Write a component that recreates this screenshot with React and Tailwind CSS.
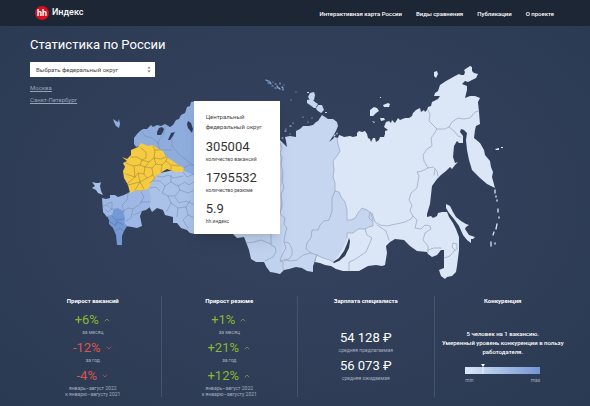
import React, { useState } from "react";
import { ChevronDown, ChevronUp } from "lucide-react";

const navItems = [
  { label: 'Интерактивная карта России', path: '#map' },
  { label: 'Виды сравнения', path: '#compare' },
  { label: 'Публикации', path: '#publications' },
  { label: 'О проекте', path: '#about' }
];

const districts = [
  'Центральный',
  'Северо-Западный',
  'Южный',
  'Северо-Кавказский',
  'Приволжский',
  'Уральский',
  'Сибирский',
  'Дальневосточный'
];

const cardStats = [
  { value: '305004', label: 'количество вакансий' },
  { value: '1795532', label: 'количество резюме' },
  { value: '5.9', label: 'hh.индекс' }
];

const growth = [
  {
    title: 'Прирост вакансий',
    rows: [
      { value: '+6%', up: true, label: ['за месяц'] },
      { value: '-12%', up: false, label: ['за год'] },
      { value: '-4%', up: false, label: ['январь–август 2022', 'к январю–августу 2021'] }
    ]
  },
  {
    title: 'Прирост резюме',
    rows: [
      { value: '+1%', up: true, label: ['за месяц'] },
      { value: '+21%', up: true, label: ['за год'] },
      { value: '+12%', up: true, label: ['январь–август 2022', 'к январю–августу 2021'] }
    ]
  }
];

const salaries = [
  { value: '54 128 ₽', label: 'средняя предлагаемая' },
  { value: '56 073 ₽', label: 'средняя ожидаемая' }
];

function Header() {
  return (
    <header className="flex h-[26px] items-center justify-between bg-[#1d2635] pr-9 pl-[35px] text-white">
      <a href="#" className="flex items-center gap-[3px]">
        <span className="flex size-[14px] items-center justify-center rounded-full bg-[#d6101e] text-[9px] leading-none font-bold">hh</span>
        <span className="text-[9px] font-medium">Индекс</span>
      </a>
      <nav className="flex gap-[14px] text-[6px] font-medium">
        {navItems.map((item) => (
          <a key={item.path} href={item.path}>{item.label}</a>
        ))}
      </nav>
    </header>
  );
}

function RussiaMap() {
  return (
    <svg viewBox="0 26 590 260" className="block w-full" strokeLinejoin="round" strokeLinecap="round" aria-hidden="true">
      {/* Far East */}
      <g fill="#dbe6f6">
        <polygon points="334,137 338,138 339,135 342,136 344,137 350,136 353,137 357,136 357,133 359,131 362,132 365,131 367,134 368,138 370,139 371,142 373,138 375,138 376,142 379,140 380,137 384,137 385,134 385,131 388,130 384,127 386,122 389,121 391,123 392,120 395,123 398,118 400,120 405,118 409,118 412,116 413,113 416,110 420,108 421,112 424,110 425,112 427,110 428,107 431,106 432,102 434,101 438,99 440,96 434,96 435,93 438,91 440,85 446,81 455,76 459,74 461,75 464,75 465,72 464,70 467,68 470,66 472,67 472,71 474,73 478,74 476,78 472,80 468,82 465,81 462,84 467,86 467,90 466,94 465,98 470,96 475,96 480,98 478,102 479,112 480,124 476,126 475,130 474,138 480,143 484,150 485,155 490,161 491,167 493,172 492,177 495,188 487,184 480,178 472,170 469,160 467,150 466,140 467,133 464,130 461,129 460,132 463,136 463,143 459,143 457,141 454,146 453,157 455,163 458,162 455,165 452,169 450,167 446,171 441,175 437,179 432,186 431,195 430,204 427,214 427,217 431,216 433,218 437,216 438,213 442,212 447,212 449,217 453,223 456,229 459,237 459,250 457,266 456,272 452,276 447,277 445,279 441,276 439,270 444,268 444,250 441,250 437,255 432,257 428,254 427,252 417,251 410,246 404,240 395,239 390,242 386,246 387,253 385,265 382,266 376,265 368,266 359,271 349,271 343,271 336,269 331,266 325,265 320,263 315,262 316,257 325,245 322,215 330,160" />
        <polygon points="446,204 450,206 453,212 456,217 461,221 466,224 469,225 466,227 465,229 469,235 475,237 473,239 471,239 471,243 467,240 463,235 459,226 454,219 449,213 446,208" />
        <polygon points="434,72 437,71 438,74 436,78 434,76" />
        <path d="M370 110l4-3 3 1 2 3-3 2-3 3-3 0zM383 105l5-2 2 1-1 3-5 0zM380 118l4 0 1 2-4 1zM372 121l3 1-1 1zM380 97l1 0 0 1-1 0z" />
        <path d="M475 140l2 1 1 4-2 0zM495 149l4-1 0 2-3 0zM501 147l2 0 0 1-2 0z" />
        <path stroke="#dbe6f6" strokeWidth="1.3" d="M495 190l0 3M496 196l0 1M497 200l0 1M498 209l0 3M499 217l0 1M497 224l-1 5M494 232l-1 3M491 242l0 4M495 243l0 1" />
      </g>
      {/* Siberia */}
      <polygon fill="#c6d6f0" points="278,138 281,141 284,144 287,147 286,141 285,137 290,136 296,137 296,134 296,131 300,129 303,126 309,126 313,125 316,122 318,121 320,118 322,115 325,117 328,119 333,119 337,122 338,126 336,131 333,136 329,142 334,138 337,138 338,144 340,151 337,156 333,161 334,170 333,177 335,183 335,191 339,192 341,197 345,202 347,210 347,220 351,220 355,218 358,213 362,208 367,210 371,213 373,220 373,226 369,227 365,229 358,229 353,233 347,233 347,239 343,248 338,256 333,262 329,259 323,258 317,256 315,261 313,266 313,272 307,271 302,268 296,267 289,269 284,270 280,274 276,273 267,268 262,255 270,220" />
      {/* Volga and Ural */}
      <polygon fill="#c0d2ee" points="230,225 282,225 282,268 277,273 270,272 266,266 264,262 256,262 251,259 249,250 246,242 244,237 237,238 231,232" />
      <polygon fill="#aac2e8" points="184,168 195,165 195,234 190,233 187,230 181,228 177,223 173,223 173,217 165,215 163,210 157,208 152,212 149,206 148,188 155,174" />
      <polygon fill="#b9cdec" points="278,140 282,144 280,151 282,158 281,168 284,178 281,188 283,208 278,216" />
      {/* Northwest */}
      <polygon fill="#8eaddd" points="196,101 191,102 190,106 187,107 185,113 181,115 179,119 176,120 173,125 170,127 165,124 161,126 157,125 153,127 151,125 147,129 143,129 140,131 137,134 134,138 134,144 136,147 139,146 148,152 170,160 182,170 196,176" />
      <polygon fill="#8eaddd" points="113,119 116,121 118,122 119,119 120,124 119,128 116,126 114,122" />
      <path fill="#2f3e59" d="M159 128l3-1 2 2-1 3-2 3-4 0 0-3zM171 133l4-1-2 4-3 4-2 0zM188 121l3 2 2 6-1 4-4-5-1-4z" />
      {/* South */}
      <polygon fill="#9db8e4" points="102,198 106,199 110,198 110,195 115,195 118,197 124,195 128,193 135,189 142,191 148,187 151,197 150,207 146,210 142,211 140,216 142,226 137,228 132,227 125,226 121,213 112,216 107,217 103,212" />
      <polygon fill="#aac2e8" points="92,182 96,183 99,183 101,182 100,186 101,191 103,195 98,193 96,190 92,188 95,186" />
      <polygon fill="#7599d5" points="107,216 112,215 114,209 118,208 123,211 125,218 124,223 127,226 124,231 122,236 122,245 117,245 116,235 113,228 109,224 109,220" />
      {/* Central */}
      <polygon fill="#f4cb42" points="122,157 127,159 131,155 131,150 138,147 141,143 148,146 153,145 157,148 163,151 166,157 173,161 178,165 184,168 183,172 175,172 167,169 162,172 155,177 153,180 148,189 141,191 137,190 130,193 128,185 124,178 123,171 125,167 123,163 127,161" />
      {/* Arctic islands */}
      <path fill="#c6d6f0" d="M310 93l4-1 1 3-1 5-4 0-2-3zM307 100l5-1 3 3 3 2-2 3 1 1-3 0-4-3-3-2zM318 105l4 0 2 5-3 3-3-2-2-2zM325 112l2 0 0 1-2 0zM307 92l2 0 0 1-2 0z" />
      <path stroke="#8eaddd" strokeWidth="1.2" d="M266 80l2 1M268 83l2 0M270 82l1 2M273 82l0 0M272 86l1 0M275 84l1 0M277 86l1 2M280 83l0 1M279 88l1 1M282 87l1 1M284 85l0 0M268 81l1 0M275 88l1 0M296 92l0 0M291 100l0 0M283 89l0 1" />
      <path stroke="#c6d6f0" strokeWidth="1.2" d="M303 117l0 0M290 126l1 0M293 123l0 0M285 131l1 0M290 134l0 0M286 129l0 0M282 138l1 0M308 122l0 0M312 118l0 0M334 136l1-1M337 133l0 1" />
      {/* Baikal */}
      <polygon fill="#2f3e59" points="349,238 350,241 349,248 345,256 339,261 334,263 333,262 339,258 344,251 347,244" />
      {/* Region borders */}
      <g fill="none" stroke="#7d8ba8" strokeWidth=".5">
        <polyline points="337,138 338,144 340,151 337,156 333,161 334,170 333,177 335,183 335,191 339,192 341,197 345,202 347,210 347,220 351,220 355,218 358,213 362,208 367,210 371,213 373,220 373,226 369,227 365,229 358,229 353,233 347,233 347,238" />
        <polyline points="335,191 332,198 332,206 332,211 329,220 324,221 320,225 318,230 312,230 311,238 307,243 306,249 311,253 317,255 323,258 330,260 334,263" />
        <path d="M317 255l-3 7M311 253l-8 2-6 5-8 1-4-2-5 3" />
        <polyline points="280,143 282,148 280,153 282,158 281,164 283,173 282,180 284,188 281,194 282,204 280,214 285,218 284,224 287,228 285,234 284,242 286,248 283,253 280,260 283,262 283,270" />
        <path d="M285 242l4 1 3 6 0 6-3 4-5 2M271 234l0 11 4 2 1 5-3 5-8 4M246 243l8-1 7-2 10 4" />
        <polyline points="365,229 367,235 372,238 369,245 366,252 360,256 354,260 349,262 349,271" />
        <polyline points="372,213 375,222 380,225 387,226 396,224 405,222 411,219 413,216 410,211 412,205 409,200 411,193 417,188 418,181 419,176 417,172 422,171 428,168 424,161 423,155 427,149 432,146 431,138 434,134 437,129 432,124 429,121 430,114 428,110" />
        <path d="M437 129l8 0 4-2 3-5 6-4 5 1 7-1 5-6 4-1M449 127l5 4 4 5 3 1M428 168l5-1 4 4 1 5M434 175l1-6M370 212l-1 6 3 3M377 225l9 6 3 9" />
        <path d="M413 216l4 4-2 8 6 1 4-4 5 1 1 3-6 4-2 7 5 6 0 6M428 250l6-2 7 0M444 258l6-2 4-5 3-2 0-5-4-1-1 4 3 3" />
      </g>
      <g fill="none" stroke="#7287ac" strokeWidth=".5">
        <path d="M142 132l3 4 7 2 6 5 2 7 11 0M165 126l-1 8-5 6-1 4M172 138l0 8 5 6 8 7 8 6M184 168l5-3 6 0M183 172l4 5 7-3" />
        <path d="M157 176l6 1 5-2 6 3 9-2M153 181l7 0 5 5 6-4 0-7M165 186l-3 7 6 3 3 7M160 191l-4-4-6 1M171 182l7 4 7-4 4 3 6-4M168 196l7 0 5-6-2-5M180 190l8 3 7-3M175 197l4 6 7-2 9 4M171 203l-4 8M171 203l7 5-1 9M178 208l8-1 2 8 7 3M186 207l4-6M188 215l-5 5 5 8" />
        <path d="M141 192l3 5-4 7-7 5-5-1-6 4M128 193l-1 7-5 5 2 7M133 209l-2 9-5 3M142 211l-8 4M150 202l-9 0M103 206l4-1 4 4 3 0M107 204l5-2 0 7-4 3-3-3" />
        <path stroke="#4e70ab" d="M112 216l4 4 8-1M110 222l5 3 2-4M115 226l3-4 5 3M116 231l4-3 3 3" />
      </g>
      <g fill="none" stroke="#a98a31" strokeWidth=".6">
        <path d="M131 157l6 0 5 3 4-2 0-6-5-4M142 160l-2 5-7 1-7-3M142 160l7 2 5-4 7 1 5-2M149 162l-4 5-5-2M154 158l1-8-2-4M155 150l4 0M145 167l-1 7-6-1-3 4-9-3M134 166l1 11M145 167l7 1 4-4-2-6M152 168l1 7-6 3-3-4M156 164l6 1 4-4 1-3M162 165l-1 7M166 161l5 4 0 5M172 165l7 1M138 173l2 9-5 8M135 177l-8 7M147 178l-7 4 4 7M153 175l2 3-5 5M140 182l-12 3" />
      </g>
    </svg>
  );
}

function DistrictCard() {
  return (
    <div className="absolute top-[29%] left-[33%] -ml-px w-[86px] bg-white px-[12px] pt-[11px] pb-[9px] text-[#444] shadow-lg">
      <h2 className="text-[6px] leading-[10px] whitespace-nowrap">Центральный<br />федеральный округ</h2>
      <dl className="mt-[7px] flex flex-col gap-[7px]">
        {cardStats.map((stat) => (
          <div key={stat.label} className="flex flex-col-reverse">
            <dt className="text-[5px] leading-[8px] whitespace-nowrap">{stat.label}</dt>
            <dd className="text-[13px] leading-[16px] text-[#333]">{stat.value}</dd>
          </div>
        ))}
      </dl>
    </div>
  );
}

function GrowthColumn({ title, rows }) {
  return (
    <section className="border-r border-[#46536c] text-center">
      <h2 className="text-[6px] leading-[9px] font-bold">{title}</h2>
      <div className="mt-[6px] flex flex-col gap-1">
        {rows.map((row) => (
          <div key={row.value}>
            <div className={`flex items-center justify-center gap-1 text-[13px] leading-[18px] ${row.up ? 'text-[#8ab82e]' : 'text-[#d9544f]'}`}>
              {row.value}
              {row.up ? <ChevronUp className="size-2" strokeWidth={2} /> : <ChevronDown className="size-2" strokeWidth={2} />}
            </div>
            <div className="text-[5px] leading-[6px] text-[#a3adbf]">
              {row.label.map((line) => (
                <p key={line}>{line}</p>
              ))}
            </div>
          </div>
        ))}
      </div>
    </section>
  );
}

export default function App() {
  const [district, setDistrict] = useState('');

  return (
    <div className="flex min-h-screen flex-col bg-[#2d3b55] bg-radial from-[#36435f] to-[#2b3a53] font-['Roboto','Liberation_Sans',sans-serif] text-white">
      <Header />

      <main className="flex-1">
        <div className="grid">
          <div className="relative col-start-1 row-start-1 self-start">
            <RussiaMap />
            <DistrictCard />
          </div>

          <div className="z-10 col-start-1 row-start-1 flex flex-col items-start self-start justify-self-start pt-[10px] pl-[30px]">
            <h1 className="text-[13px] leading-[18px]">Статистика по России</h1>
            <div className="relative mt-2 w-[125px]">
              <select
                aria-label="Федеральный округ"
                value={district}
                onChange={(e) => setDistrict(e.target.value)}
                className="block h-[15px] w-full appearance-none bg-white px-[6px] text-[6px] text-[#444]"
              >
                <option value="">Выбрать федеральный округ</option>
                {districts.map((name) => (
                  <option key={name} value={name}>{name}</option>
                ))}
              </select>
              <svg viewBox="0 0 4 7" className="pointer-events-none absolute top-1 right-1 h-[7px] w-1 fill-[#777]">
                <path d="M2 .500l1.500 2h-3zM2 6.500l1.500-2h-3z" />
              </svg>
            </div>
            <div className="mt-[6px] flex flex-col items-start gap-[3px] text-[6px] leading-[9px] text-[#98a3b6] underline">
              <a href="#moscow">Москва</a>
              <a href="#spb">Санкт-Петербург</a>
            </div>
          </div>
        </div>

        <div className="mt-[10px] grid grid-cols-4 pr-[19px] pb-[9px] pl-[25px]">
          {growth.map((column) => (
            <GrowthColumn key={column.title} title={column.title} rows={column.rows} />
          ))}

          <section className="border-r border-[#46536c] text-center">
            <h2 className="text-[6px] leading-[9px] font-bold">Зарплата специалиста</h2>
            <div className="mt-6 flex flex-col gap-1">
              {salaries.map((salary) => (
                <div key={salary.label}>
                  <p className="text-[13px] leading-[18px]">{salary.value}</p>
                  <p className="text-[5px] leading-[6px] text-[#a3adbf]">{salary.label}</p>
                </div>
              ))}
            </div>
          </section>

          <section className="text-center">
            <h2 className="text-[6px] leading-[9px] font-bold">Конкуренция</h2>
            <p className="mt-6 text-[6px] leading-[9px] font-medium">
              5 человек на 1 вакансию.<br />
              Умеренный уровень конкуренции в пользу работодателя.
            </p>
            <div className="mx-auto mt-2 w-[75px]">
              <svg viewBox="0 0 75 10" className="block w-full" role="img" aria-label="Уровень конкуренции">
                <defs>
                  <linearGradient id="scale">
                    <stop offset="0" stopColor="#dce7f8" />
                    <stop offset="1" stopColor="#7396d1" />
                  </linearGradient>
                </defs>
                <rect y="3" width="75" height="7" fill="url(#scale)" />
                <path d="M16 0h4l-2 3z" fill="#fff" />
                <path d="M18 3v7" stroke="#fff" strokeWidth=".7" />
              </svg>
              <div className="mt-[3px] flex justify-between text-[5px] leading-[6px] text-[#a3adbf]">
                <span>min</span>
                <span>max</span>
              </div>
            </div>
          </section>
        </div>
      </main>
    </div>
  );
}
